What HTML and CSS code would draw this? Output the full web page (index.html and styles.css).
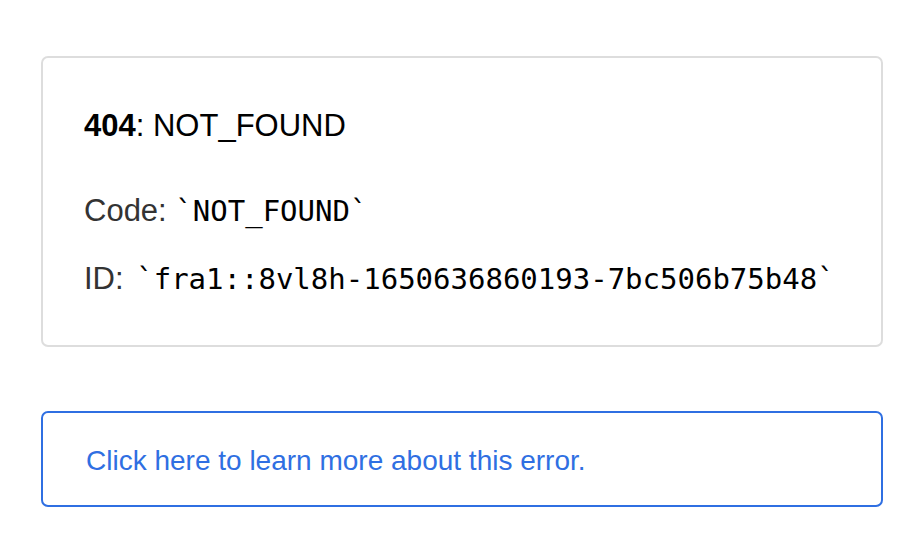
FILE: index.html
```html
<!DOCTYPE html>
<html>
<head>
<meta charset="utf-8">
<link rel="stylesheet" href="styles.css">
</head>
<body>
<main class="page">
  <section class="error-box">
    <h1 class="title"><span class="code-num">404</span>: NOT_FOUND</h1>
    <p class="detail">Code: <code class="mono">`NOT_FOUND`</code></p>
    <p class="detail detail-id">ID: <code class="mono">`fra1::8vl8h-1650636860193-7bc506b75b48`</code></p>
  </section>
  <a class="help-box" href="#">Click here to learn more about this error.</a>
</main>
</body>
</html>
```
FILE: styles.css
```css
html, body {
  margin: 0;
  padding: 0;
  background: #ffffff;
}

body {
  font-family: "Liberation Sans", Arial, Helvetica, sans-serif;
}

.page {
  width: 842px;
  padding: 56px 0 0 41px;
  display: flex;
  flex-direction: column;
  gap: 64px;
}

.error-box {
  box-sizing: border-box;
  height: 291px;
  border: 2px solid #dddddd;
  border-radius: 7px;
  padding: 50px 41px 0 41px;
}

.title {
  margin: 0;
  font-size: 31px;
  line-height: 36px;
  font-weight: normal;
  color: #000000;
}

.code-num {
  font-weight: bold;
}

.detail {
  margin: 49px 0 0 0;
  font-size: 31px;
  line-height: 36px;
  color: #333333;
}

.detail-id {
  margin-top: 32px;
}

.mono {
  font-family: "DejaVu Sans Mono", "Liberation Mono", monospace;
  font-size: 29px;
  color: #000000;
}

.detail-id .mono {
  margin-left: 4px;
}

.help-box {
  display: block;
  box-sizing: border-box;
  height: 96px;
  border: 2px solid #2f6fe2;
  border-radius: 7px;
  padding: 31px 42px 0 43px;
  font-size: 28px;
  line-height: 34px;
  color: #2f6fe2;
  text-decoration: none;
}
```
